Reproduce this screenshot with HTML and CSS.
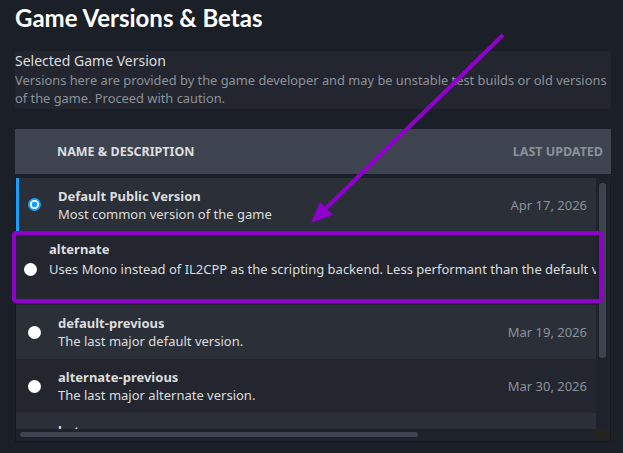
FILE: index.html
```html
<!DOCTYPE html>
<html>
<head>
<meta charset="utf-8">
<link rel="stylesheet" href="styles.css">
</head>
<body>
<div class="page">
  <h1 class="title">Game Versions &amp; Betas</h1>
  <section class="selected">
    <div class="sel-title">Selected Game Version</div>
    <p class="sel-desc">Versions here are provided by the game developer and may be unstable test builds or old versions of the game. Proceed with caution.</p>
  </section>
  <div class="table">
    <div class="thead">
      <span class="th-name">NAME &amp; DESCRIPTION</span>
      <span class="th-date">LAST UPDATED</span>
    </div>
    <div class="tbody">
      <div class="rows-wrap">
        <div class="rows">
          <div class="row light current">
            <span class="radio on"></span>
            <div class="info">
              <div class="name">Default Public Version</div>
              <div class="desc">Most common version of the game</div>
            </div>
            <span class="date">Apr 17, 2026</span>
          </div>
          <div class="row dark tall">
            <span class="radio"></span>
            <div class="info">
              <div class="name">alternate</div>
              <div class="desc">Uses Mono instead of IL2CPP as the scripting backend. Less performant than the default version, but more compatible with mods.</div>
            </div>
          </div>
          <div class="row light">
            <span class="radio"></span>
            <div class="info">
              <div class="name">default-previous</div>
              <div class="desc">The last major default version.</div>
            </div>
            <span class="date">Mar 19, 2026</span>
          </div>
          <div class="row dark">
            <span class="radio"></span>
            <div class="info">
              <div class="name">alternate-previous</div>
              <div class="desc">The last major alternate version.</div>
            </div>
            <span class="date">Mar 30, 2026</span>
          </div>
          <div class="row light">
            <span class="radio"></span>
            <div class="info">
              <div class="name">beta</div>
              <div class="desc">Public beta branch.</div>
            </div>
            <span class="date">Apr 20, 2026</span>
          </div>
        </div>
        <div class="vscroll"><div class="vthumb"></div></div>
      </div>
      <div class="hscroll">
        <div class="htrack"><div class="hthumb"></div></div>
        <div class="corner"></div>
      </div>
    </div>
  </div>
</div>
<svg class="annot" width="623" height="453" viewBox="0 0 623 453">
  <rect x="14" y="233" width="587" height="68" rx="2" fill="none" stroke="#9000cc" stroke-width="4"/>
  <line x1="503" y1="35" x2="320" y2="214" stroke="#9000cc" stroke-width="4"/>
  <polygon points="311,223 320,202 333,215" fill="#9000cc"/>
</svg>
</body>
</html>
```
FILE: styles.css
```css
* { box-sizing: border-box; }
html, body { margin: 0; padding: 0; }
body {
  background: #1b1f27;
  font-family: "Noto Sans", "Open Sans", sans-serif;
  color: #dcdedf;
  width: 623px;
  height: 453px;
  overflow: hidden;
  position: relative;
}
.page {
  padding: 2px 12px 0 15px;
}
.title {
  margin: 0;
  font-family: Lato, "Noto Sans", sans-serif;
  font-size: 24px;
  font-weight: 700;
  line-height: 32px;
  color: #ffffff;
}
.selected {
  margin-top: 17px;
  background: #23262e;
  border-radius: 2px;
  height: 58px;
}
.sel-title {
  font-size: 14px;
  line-height: 20px;
  color: #dcdedf;
}
.sel-desc {
  margin: 0;
  font-size: 12.85px;
  line-height: 18px;
  color: #8b929a;
}
.table {
  margin-top: 20px;
  width: 596px;
}
.thead {
  height: 45px;
  background: #3d4450;
  display: flex;
  align-items: center;
  padding: 0 8px 0 42px;
  font-size: 12.5px;
  font-weight: 700;
}
.th-name { color: #dcdedf; }
.th-date { margin-left: auto; color: #8b929a; }
.tbody {
  margin-top: 4px;
  background: #1e222a;
  border: 1px solid #161920;
  border-top: none;
  border-left-color: #15181e;
}
.rows-wrap {
  display: flex;
  height: 251px;
}
.rows {
  flex: 1;
  overflow: hidden;
  min-width: 0;
}
.row {
  display: flex;
  align-items: center;
  height: 54px;
  padding-right: 9px;
  border-left: 3px solid transparent;
  white-space: nowrap;
}
.row.light { background: #2b2f38; }
.row.dark { background: #23262e; }
.row.current { border-left-color: #1a9fff; height: 53px; }
.row.tall { height: 74px; align-items: flex-start; }
.radio {
  flex: none;
  width: 13px;
  height: 13px;
  border-radius: 50%;
  background: #ffffff;
  margin-left: 9px;
  margin-right: 17px;
}
.radio.on {
  background: radial-gradient(circle, #1a9fff 0 2.6px, #ffffff 3.2px 4.2px, #1a9fff 4.8px);
}
.row.tall .radio { margin-left: 5px; margin-right: 12px; margin-top: 32px; }
.row.tall .info { padding-top: 9px; }
.row.tall .desc { margin-top: 2px; }
.info { min-width: 0; }
.name {
  font-size: 13px;
  font-weight: 700;
  line-height: 18px;
}
.desc {
  font-size: 13px;
  line-height: 18px;
}
.date {
  margin-left: auto;
  font-size: 13px;
  color: #8b929a;
}
.vscroll {
  width: 14px;
  flex: none;
  background: #1e222a;
  padding: 5px 4px 0 3px;
}
.vthumb {
  height: 175px;
  background: #3d4450;
  border-radius: 3px;
}
.hscroll {
  display: flex;
  height: 12px;
}
.htrack {
  flex: 1;
  padding: 3px 0 0 4px;
}
.hthumb {
  width: 398px;
  height: 5px;
  background: #3d4450;
  border-radius: 3px;
}
.corner {
  width: 14px;
  height: 11px;
  background: #24231f;
}
.annot {
  position: absolute;
  left: 0;
  top: 0;
  pointer-events: none;
}
```
